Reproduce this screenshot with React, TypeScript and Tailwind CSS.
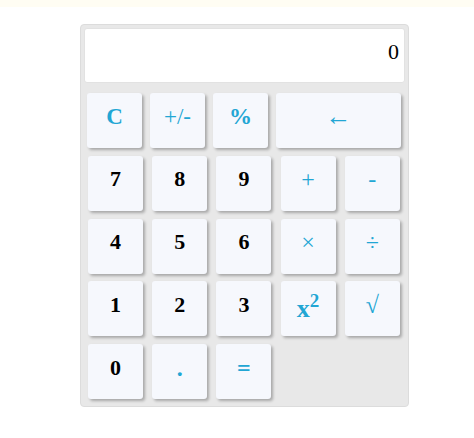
import React from "react";

type B = { label: React.ReactNode; kind: "num" | "op"; bold?: boolean; wide?: boolean; size?: string };

const btnBase =
  "h-[55px] rounded-[3px] bg-[#f6f8fd] shadow-[2px_2px_3px_rgba(0,0,0,0.28)] flex items-center justify-center pb-[8px] leading-none";

function Btn({ b }: { b: B }) {
  const color = b.kind === "num" ? "text-black font-bold" : b.bold ? "text-[#22a6d4] font-bold" : "text-[#22a6d4] font-normal";
  return (
    <div className={`${btnBase} ${b.wide ? "w-[125px]" : "w-[55px]"} ${b.size ?? "text-[22px]"} ${color}`}>{b.label}</div>
  );
}

export default function App() {
  const row1: B[] = [
    { label: "C", kind: "op", bold: true, size: "text-[23px]" },
    { label: "+/-", kind: "op", size: "text-[23px]" },
    { label: "%", kind: "op", bold: true, size: "text-[23px]" },
    { label: "←", kind: "op", wide: true, size: "text-[26px]" },
  ];
  const rows: B[][] = [
    [
      { label: "7", kind: "num" },
      { label: "8", kind: "num" },
      { label: "9", kind: "num" },
      { label: "+", kind: "op", size: "text-[24px]" },
      { label: "-", kind: "op", size: "text-[24px]" },
    ],
    [
      { label: "4", kind: "num" },
      { label: "5", kind: "num" },
      { label: "6", kind: "num" },
      { label: "×", kind: "op", size: "text-[24px]" },
      { label: "÷", kind: "op", size: "text-[24px]" },
    ],
    [
      { label: "1", kind: "num" },
      { label: "2", kind: "num" },
      { label: "3", kind: "num" },
      {
        label: (
          <span className="relative top-[4px]">
            x<sup className="text-[19px] relative top-[-10px] align-baseline">2</sup>
          </span>
        ),
        kind: "op",
        bold: true,
        size: "text-[26px]",
      },
      { label: "√", kind: "op", size: "text-[24px]" },
    ],
    [
      { label: "0", kind: "num" },
      { label: ".", kind: "op", bold: true, size: "text-[24px]" },
      { label: "=", kind: "op", bold: true, size: "text-[24px]" },
    ],
  ];
  return (
    <div className="w-[474px] h-[438px] bg-white" style={{ fontFamily: '"Liberation Serif", "Times New Roman", serif' }}>
      <div className="h-[7px] bg-[#fffdf3]" />
      <div className="ml-[80px] mt-[17px] w-[329px] h-[383px] bg-[#e8e8e8] border border-[#dcdcdc] rounded-[4px] p-[3px]">
        <div className="h-[55px] bg-white rounded-[3px] border border-[#e2e2e2] flex justify-end pr-[5px] pt-[12px] text-[22px] leading-none text-black">
          0
        </div>
        <div className="mt-[10px] pl-[3px] flex flex-col gap-y-[7.75px]">
          <div className="flex gap-x-[8px]">
            {row1.map((b, i) => (
              <Btn key={i} b={b} />
            ))}
          </div>
          {rows.map((r, ri) => (
            <div key={ri} className="flex gap-x-[9.2px] pl-[1px]">
              {r.map((b, i) => (
                <Btn key={i} b={b} />
              ))}
            </div>
          ))}
        </div>
      </div>
    </div>
  );
}
